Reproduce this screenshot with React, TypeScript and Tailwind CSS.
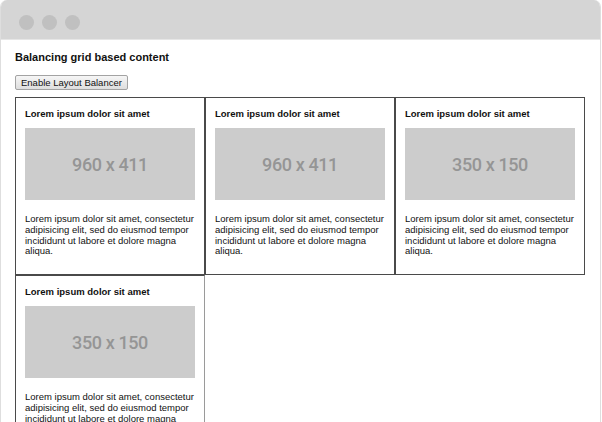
import React from "react";

const cards = [
  { label: "960 x 411", bottomLight: false },
  { label: "960 x 411", bottomLight: false },
  { label: "350 x 150", bottomLight: false },
  { label: "350 x 150", bottomLight: true },
];

function Card({ label, light }: { label: string; light: boolean }) {
  return (
    <div
      className={
        light
          ? "w-[190px] border border-[#4a4a4a] border-r-[#9a9a9a] px-[9px] pt-[10px] pb-[17px]"
          : "w-[190px] border border-[#4a4a4a] px-[9px] pt-[10px] pb-[17px]"
      }
    >
      <h2 className="text-[9.5px] leading-[11px] font-bold text-[#111]">Lorem ipsum dolor sit amet</h2>
      <div className="mt-[9px] h-[72px] bg-[#cccccc] flex items-center justify-center">
        <span className="text-[18px] font-medium tracking-[-0.4px] text-[#959595] font-['Roboto',sans-serif]">{label}</span>
      </div>
      <p className="mt-[14px] text-[9.5px] leading-[10.75px] text-[#111]">
        Lorem ipsum dolor sit amet, consectetur adipisicing elit, sed do eiusmod tempor incididunt ut labore et dolore magna aliqua.
      </p>
    </div>
  );
}

export default function App() {
  return (
    <div className="w-[602px] h-[422px] overflow-hidden bg-white font-['Liberation_Sans',Arial,sans-serif]">
      <div className="w-[601px] h-[422px] flex flex-col rounded-t-[7px] overflow-hidden border-x border-[#dedede]">
        <div className="h-[40px] shrink-0 bg-[#d5d5d5] border-b border-[#e6e6e6] flex items-start gap-[8px] pl-[18px] pt-[15px]">
          <div className="w-[15px] h-[15px] rounded-full bg-[#c0c0c0]" />
          <div className="w-[15px] h-[15px] rounded-full bg-[#c0c0c0]" />
          <div className="w-[15px] h-[15px] rounded-full bg-[#c0c0c0]" />
        </div>
        <div className="flex-1 bg-white pl-[14px] pt-[11px]">
          <h1 className="text-[11px] leading-[13px] font-bold text-[#111]">Balancing grid based content</h1>
          <button className="mt-[11px] h-[15px] px-[5px] text-[9.5px] leading-[13px] text-[#111] border border-[#a3a3a3] rounded-[2px] bg-gradient-to-b from-[#f6f6f6] to-[#dedede] flex items-center">
            Enable Layout Balancer
          </button>
          <div className="mt-[7px] w-[570px] flex flex-wrap">
            {cards.map((c, i) => (
              <Card key={i} label={c.label} light={c.bottomLight} />
            ))}
          </div>
        </div>
      </div>
    </div>
  );
}
